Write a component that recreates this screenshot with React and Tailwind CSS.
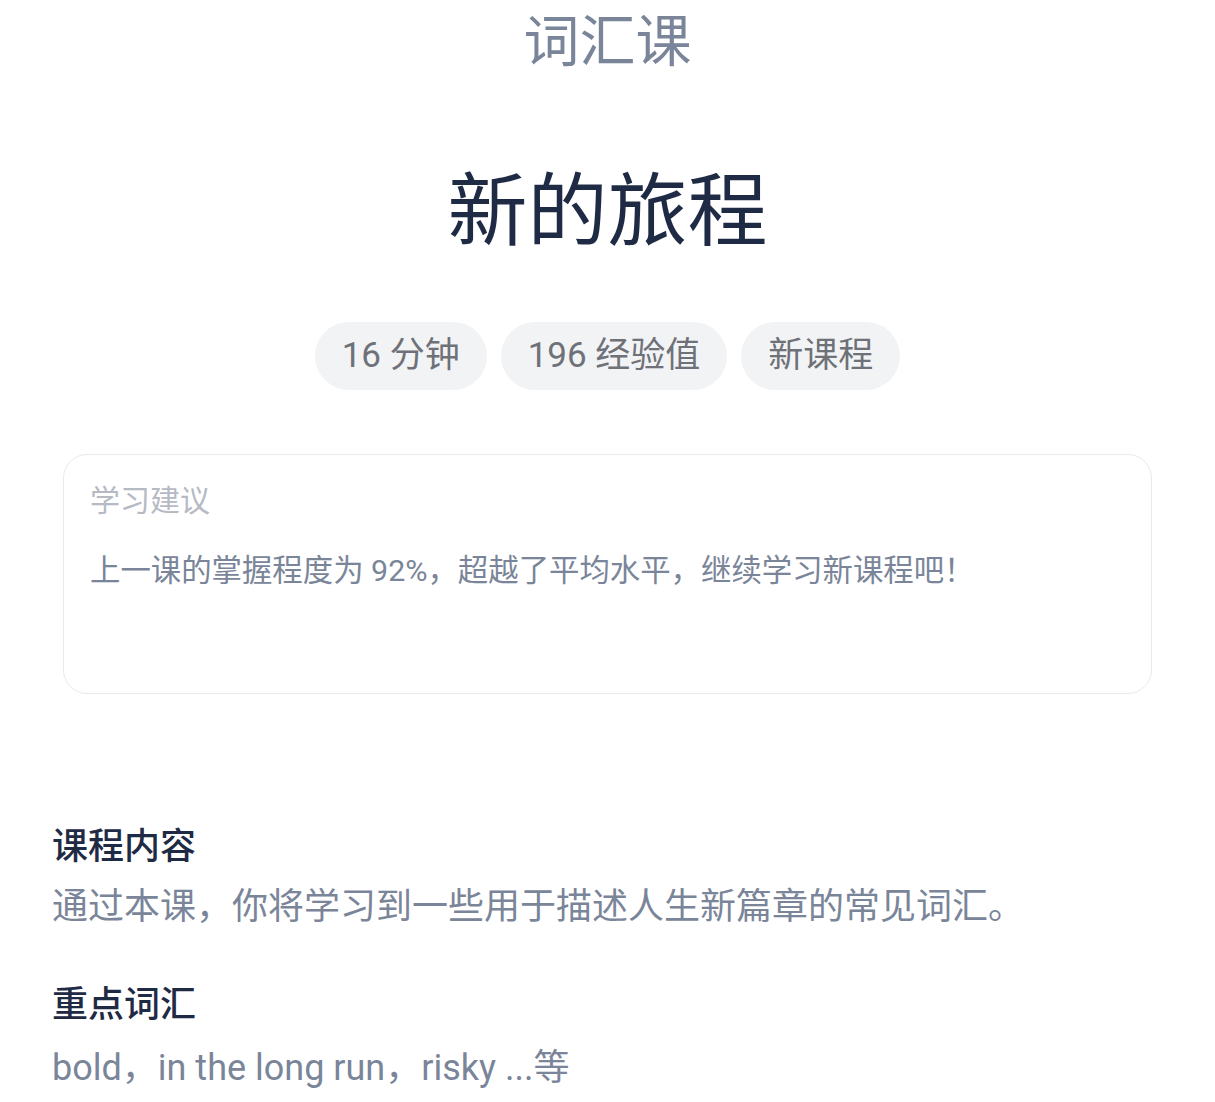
export default function App() {
  const font = { fontFamily: "Roboto, 'Noto Sans CJK SC', sans-serif" };
  return (
    <div className="w-[1215px] min-h-[1102px] bg-white flex flex-col" style={font}>
      <div className="text-center text-[56px] leading-[84px] text-[#7a8599]">词汇课</div>
      <div className="mt-[68px] text-center text-[80px] leading-[120px] font-normal text-[#1f2a44]">新的旅程</div>
      <div className="mt-[50px] flex justify-center gap-[14px]">
        {["16 分钟", "196 经验值", "新课程"].map((t) => (
          <div key={t} className="h-[68px] px-[27px] rounded-full bg-[#f2f3f5] flex items-center text-[35px] text-[#6e7178]">
            {t}
          </div>
        ))}
      </div>
      <div className="mt-[64px] mx-[63px] h-[240px] rounded-[24px] border border-[#e8eaee] px-[26px] pt-[23px]">
        <div className="text-[30px] leading-[45px] text-[#b5bac3]">学习建议</div>
        <div className="mt-[25px] text-[30.4px] leading-[45px] text-[#7a8599]">
          上一课的掌握程度为 92%，超越了平均水平，继续学习新课程吧！
        </div>
      </div>
      <div className="mt-[123px] px-[52px]">
        <div className="text-[36px] leading-[60px] font-medium text-[#1f2a44]">课程内容</div>
        <div className="text-[36px] leading-[60px] text-[#7a8599]">通过本课，你将学习到一些用于描述人生新篇章的常见词汇。</div>
        <div className="mt-[38px] text-[36px] leading-[60px] font-medium text-[#1f2a44]">重点词汇</div>
        <div className="mt-[3px] text-[36px] leading-[60px] text-[#7a8599]">bold，in the long run，risky ...等</div>
      </div>
    </div>
  );
}
